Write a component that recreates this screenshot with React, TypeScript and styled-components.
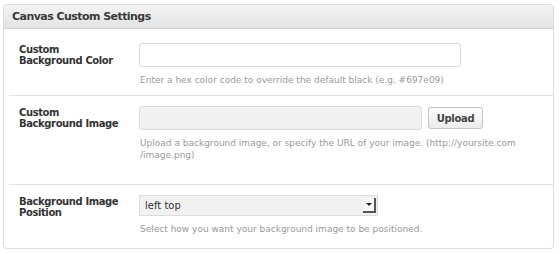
import styled, { createGlobalStyle } from "styled-components";

const GlobalStyle = createGlobalStyle`
    html, body {
        margin: 0;
        padding: 0;
        background: #ffffff;
    }
    body {
        font-family: "DejaVu Sans", "Liberation Sans", sans-serif;
        color: #333;
    }
`

const Panel = styled.div`
    margin: 4px 0 0 3px;
    width: 549px;
    height: 243px;
    border: 1px solid #dcdcdc;
    border-radius: 4px;
    background: #fff;
    box-shadow: 0 1px 1px rgba(0, 0, 0, 0.04);
    overflow: hidden;
`

const Header = styled.div`
    height: 23px;
    display: flex;
    align-items: center;
    padding-left: 8px;
    background: linear-gradient(#f3f3f3, #e3e3e3);
    border-bottom: 1px solid #d4d4d4;

    h3 {
        margin: 0;
        font-size: 11px;
        font-weight: bold;
        letter-spacing: -0.55px;
        color: #3a3a3a;
    }
`

const Body = styled.div`
    padding: 0 0 0 5px;
`

const Row = styled.div<{ $height: number; $top: number; $last?: boolean }>`
    display: grid;
    grid-template-columns: 130px 1fr;
    height: ${p => p.$height}px;
    padding-top: ${p => p.$top}px;
    box-sizing: border-box;
    border-bottom: ${p => (p.$last ? "none" : "1px solid #e2e2e2")};
`

const Label = styled.div`
    padding-left: 10px;
    padding-top: 1px;
    font-size: 10px;
    font-weight: bold;
    letter-spacing: -0.4px;
    line-height: 11px;
    color: #333;
`

const Field = styled.div`
    display: flex;
    flex-direction: column;
`

const Controls = styled.div`
    display: flex;
    align-items: center;
    gap: 6px;
`

const TextInput = styled.input<{ $width: number; $disabled?: boolean }>`
    width: ${p => p.$width}px;
    height: 24px;
    box-sizing: border-box;
    border: 1px solid #dadada;
    border-radius: 3px;
    background: ${p => (p.$disabled ? "#f1f1f1" : "#fff")};
    padding: 0 6px;
    font-family: inherit;
    font-size: 10px;
    outline: none;
`

const UploadButton = styled.button`
    width: 55px;
    height: 22px;
    border: 1px solid #c4c4c4;
    border-radius: 3px;
    background: linear-gradient(#fdfdfd, #ececec);
    font-family: inherit;
    font-size: 10px;
    font-weight: bold;
    letter-spacing: -0.3px;
    color: #444;
    padding: 0;
`

const Select = styled.div`
    width: 239px;
    height: 21px;
    box-sizing: border-box;
    display: flex;
    align-items: center;
    justify-content: space-between;
    border: 1px solid #dcdcdc;
    background: #f1f1f1;
    padding-left: 5px;
    font-size: 10px;
    color: #333;
`

const Arrow = styled.span`
    width: 13px;
    height: 15px;
    margin-right: 1px;
    display: flex;
    align-items: center;
    justify-content: center;
    border-right: 2px solid #555;
    border-bottom: 2px solid #555;
    box-sizing: border-box;
    background: #f6f6f6;

    &::after {
        content: "";
        border-left: 3px solid transparent;
        border-right: 3px solid transparent;
        border-top: 3px solid #222;
    }
`

const Hint = styled.p`
    margin: 7px 0 0 1px;
    font-size: 9px;
    line-height: 12px;
    color: #9a9a9a;
    max-width: 400px;
`

export default function App() {
    return (
        <>
            <GlobalStyle />
            <Panel>
                <Header>
                    <h3>Canvas Custom Settings</h3>
                </Header>
                <Body>
                    <Row $height={67} $top={14}>
                        <Label>Custom<br />Background Color</Label>
                        <Field>
                            <TextInput $width={322} />
                            <Hint>Enter a hex color code to override the default black (e.g. #697e09)</Hint>
                        </Field>
                    </Row>
                    <Row $height={89} $top={10}>
                        <Label>Custom<br />Background Image</Label>
                        <Field>
                            <Controls>
                                <TextInput $width={283} $disabled />
                                <UploadButton>Upload</UploadButton>
                            </Controls>
                            <Hint>Upload a background image, or specify the URL of your image. (http://yoursite.com /image.png)</Hint>
                        </Field>
                    </Row>
                    <Row $height={63} $top={10} $last>
                        <Label>Background Image<br />Position</Label>
                        <Field>
                            <Select>
                                left top
                                <Arrow />
                            </Select>
                            <Hint>Select how you want your background image to be positioned.</Hint>
                        </Field>
                    </Row>
                </Body>
            </Panel>
        </>
    )
}
